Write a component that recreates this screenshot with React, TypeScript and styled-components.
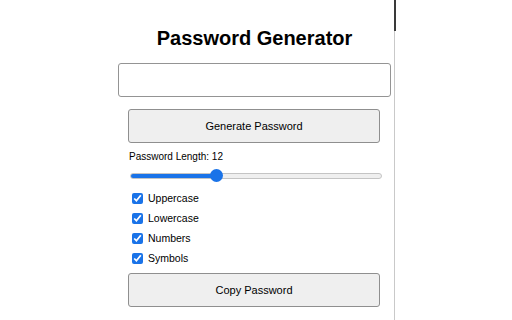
import React, { useState } from "react";
import styled, { createGlobalStyle } from "styled-components";

const GlobalStyle = createGlobalStyle`
  html, body {
    margin: 0;
    padding: 0;
    background: #ffffff;
  }
  body {
    font-family: "Liberation Sans", Arial, sans-serif;
    color: #000;
  }
`;

const Page = styled.div`
  display: flex;
  width: 512px;
  height: 320px;
  overflow: hidden;
`;

const Panel = styled.div`
  position: relative;
  width: 276px;
  height: 320px;
  padding-left: 118px;
  border-right: 1px solid #c9c9c9;
`;

// scroll thumb drawn over the panel edge
const ScrollThumb = styled.div`
  position: absolute;
  top: 0;
  right: -2px;
  width: 2px;
  height: 31px;
  background: #3a3a3a;
`;

const Title = styled.h1`
  margin: 27px 0 0;
  font-size: 20px;
  line-height: 23px;
  font-weight: 700;
  text-align: center;
  width: 273px;
`;

const Output = styled.input`
  box-sizing: border-box;
  display: block;
  width: 273px;
  height: 34px;
  margin-top: 13px;
  border: 1px solid #949494;
  border-radius: 3px;
  background: #fff;
  font-family: inherit;
  font-size: 13px;
  padding: 0 8px;
  outline: none;
`;

const Section = styled.div`
  display: flex;
  flex-direction: column;
  width: 256px;
  margin-left: 10px;
`;

const Button = styled.button<{ $top: number }>`
  box-sizing: border-box;
  width: 252px;
  height: 34px;
  margin-top: ${(p) => p.$top}px;
  background: #efefef;
  border: 1px solid #8f8f8f;
  border-radius: 3px;
  font-family: "Liberation Sans", Arial, sans-serif;
  font-size: 11px;
  color: #000;
  cursor: pointer;
`;

const LengthLabel = styled.label`
  margin-top: 8px;
  margin-left: 1px;
  font-size: 10px;
  line-height: 11px;
`;

const Slider = styled.input`
  -webkit-appearance: none;
  appearance: none;
  width: 252px;
  height: 13px;
  margin: 7px 0 0 2px;
  background: transparent;

  &::-webkit-slider-runnable-track {
    height: 6px;
    border-radius: 3px;
    box-sizing: border-box;
    border: 1px solid #c4c4c4;
    background: linear-gradient(
      to right,
      #1a73e8 0,
      #1a73e8 var(--fill),
      #efefef var(--fill),
      #efefef 100%
    );
  }

  &::-webkit-slider-thumb {
    -webkit-appearance: none;
    width: 13px;
    height: 13px;
    margin-top: -4.5px;
    border-radius: 50%;
    background: #1a73e8;
    border: none;
  }
`;

const Options = styled.div`
  display: flex;
  flex-direction: column;
  margin-top: 6px;
`;

const OptionRow = styled.label`
  display: flex;
  align-items: center;
  height: 20px;
  font-size: 10.5px;
`;

const Check = styled.input`
  width: 11px;
  height: 11px;
  margin: 0 5px 0 4px;
  accent-color: #1a73e8;
`;

const options = ["Uppercase", "Lowercase", "Numbers", "Symbols"];

const App = () => {
  const [length, setLength] = useState(12);
  const [checked, setChecked] = useState<Record<string, boolean>>({
    Uppercase: true,
    Lowercase: true,
    Numbers: true,
    Symbols: true,
  });
  const min = 4;
  const max = 28;
  const frac = (length - min) / (max - min);
  const fill = `${6.5 + frac * 239}px`;

  return (
    <>
      <GlobalStyle />
      <Page>
        <Panel>
          <ScrollThumb />
          <Title>Password Generator</Title>
          <Output type="text" readOnly value="" />
          <Section>
            <Button $top={12}>Generate Password</Button>
            <LengthLabel htmlFor="len">Password Length: {length}</LengthLabel>
            <Slider
              id="len"
              type="range"
              min={min}
              max={max}
              value={length}
              onChange={(e) => setLength(Number(e.target.value))}
              style={{ ["--fill" as string]: fill } as React.CSSProperties}
            />
            <Options>
              {options.map((name) => (
                <OptionRow key={name}>
                  <Check
                    type="checkbox"
                    checked={checked[name]}
                    onChange={() =>
                      setChecked((prev) => ({ ...prev, [name]: !prev[name] }))
                    }
                  />
                  {name}
                </OptionRow>
              ))}
            </Options>
            <Button $top={5}>Copy Password</Button>
          </Section>
        </Panel>
      </Page>
    </>
  );
};

export default App;
